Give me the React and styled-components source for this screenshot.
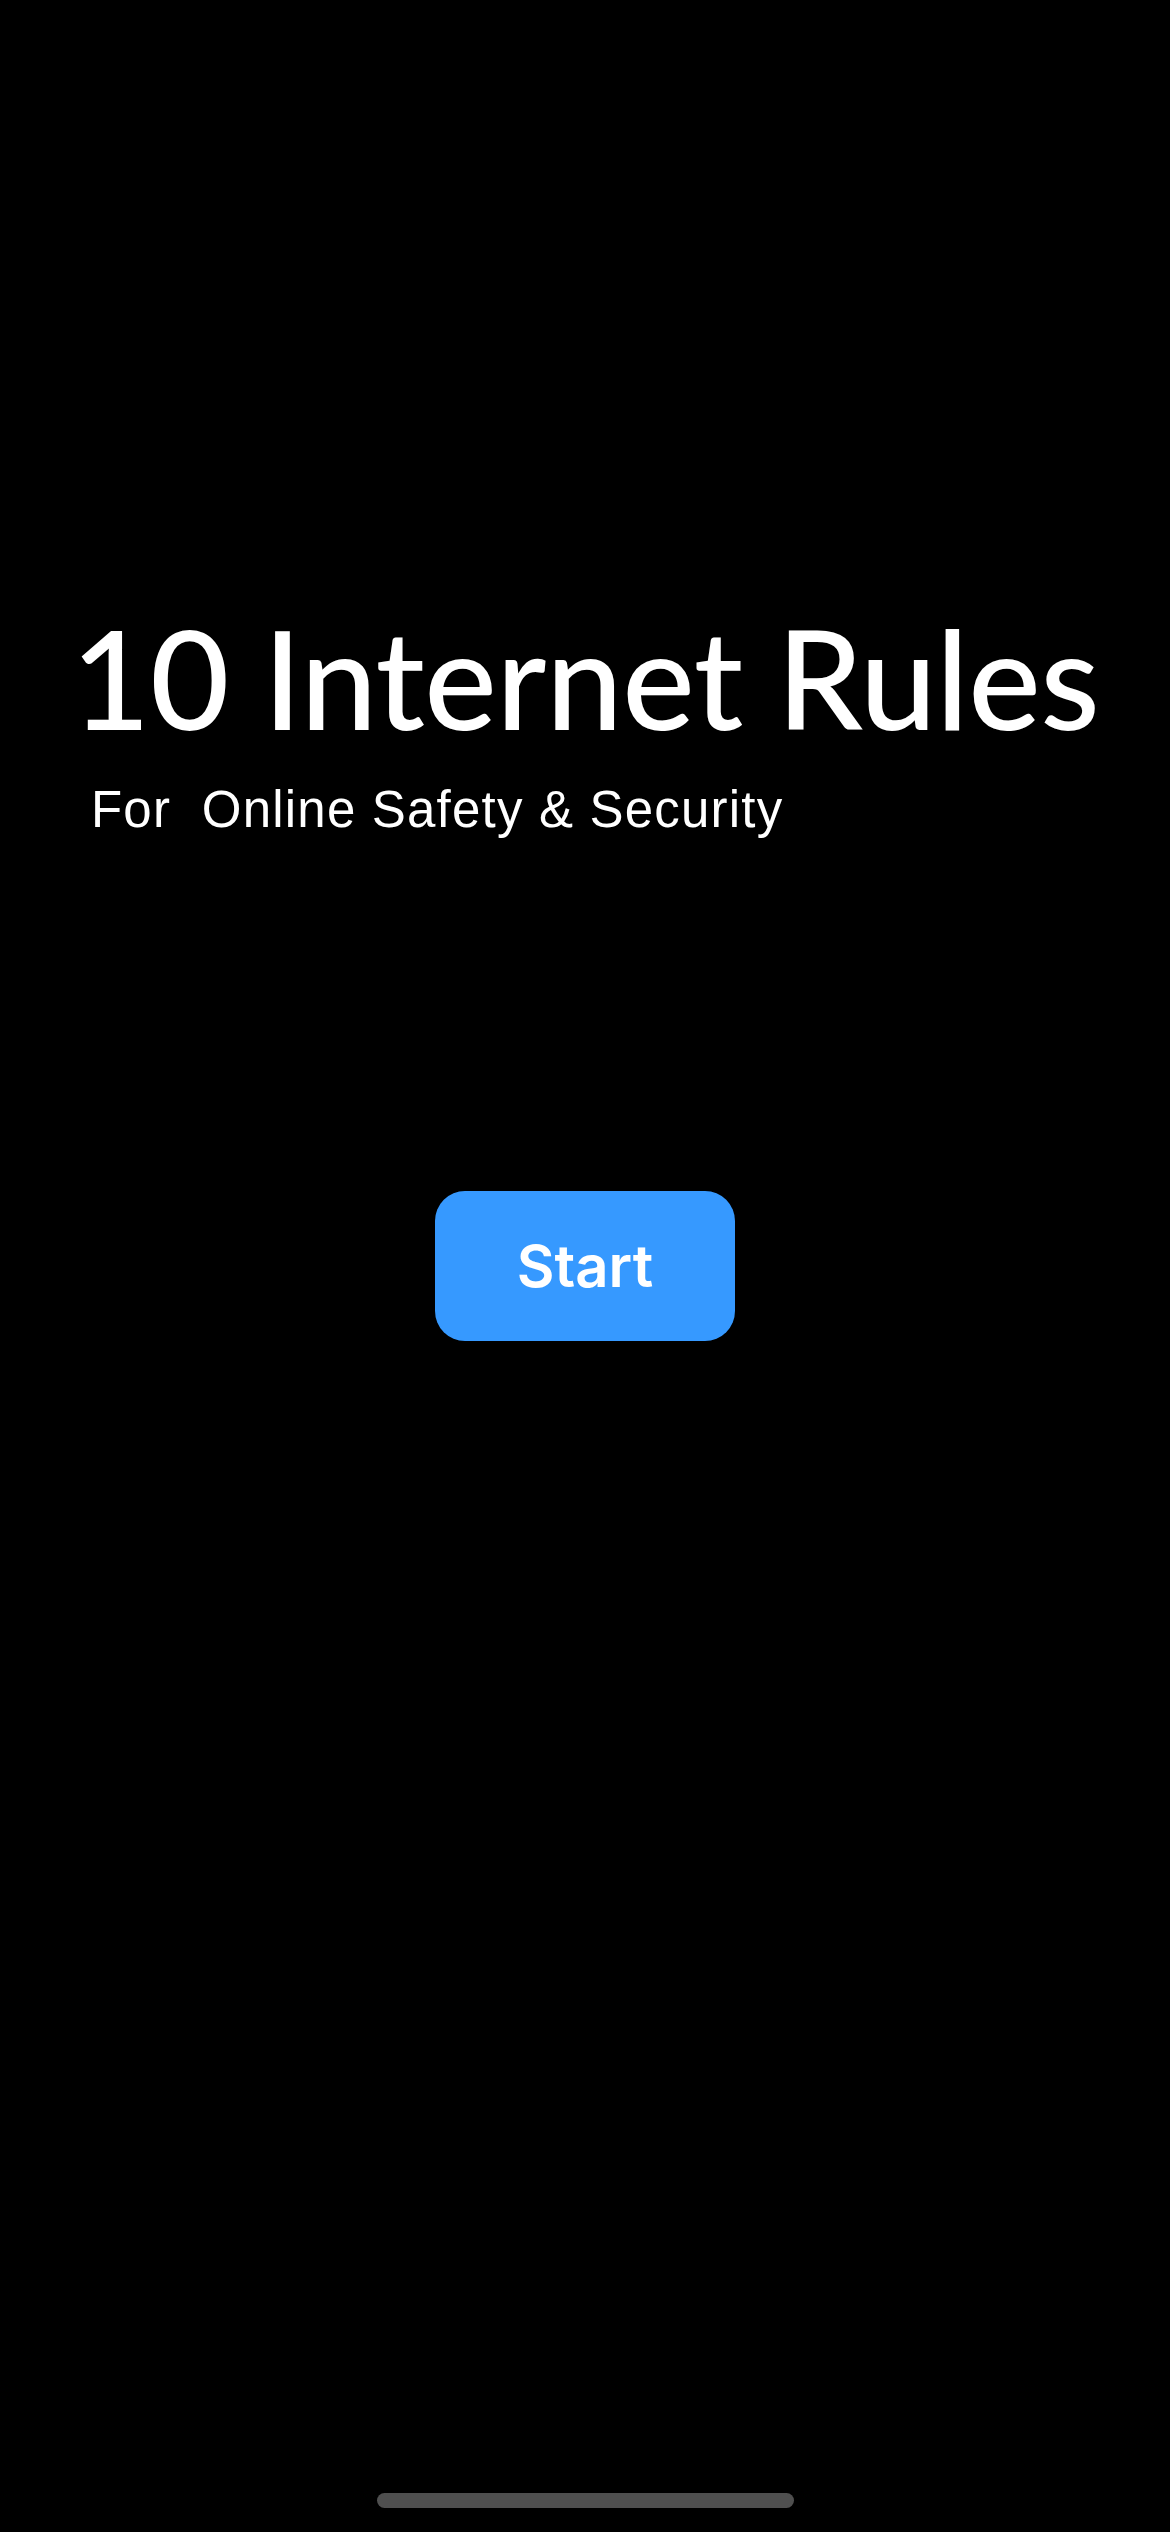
import * as React from "react";
import styled, { createGlobalStyle } from "styled-components";

const GlobalStyle = createGlobalStyle`
    html, body {
        margin: 0;
        padding: 0;
        background: #000000;
    }
`;

const Screen = styled.div`
    display: flex;
    flex-direction: column;
    align-items: center;
    height: 2532px;
    width: 1170px;
    background: #000000;
    color: #FFFFFF;
    overflow: hidden;
`;

const Heading = styled.div`
    display: flex;
    flex-direction: column;
    align-items: flex-start;
    padding-top: 592px;
    width: 1028px;
`;

const Title = styled.h1`
    margin: 0;
    font-family: Lato, "Noto Sans", sans-serif;
    font-weight: 500;
    font-size: 137px;
    line-height: 170px;
    letter-spacing: -0.5px;
    white-space: nowrap;
`;

const Subtitle = styled.p`
    margin: 20px 0 0 20px;
    font-family: "Liberation Sans", Arial, sans-serif;
    font-size: 51px;
    line-height: 56px;
    letter-spacing: 1.2px;
    white-space: pre;
`;

const StartButton = styled.button`
    display: flex;
    align-items: center;
    justify-content: center;
    margin-top: 353px;
    width: 300px;
    height: 150px;
    border: none;
    border-radius: 30px;
    background: #3699FF;
    color: #FFFFFF;
    font-family: Inter, "Liberation Sans", sans-serif;
    font-weight: 600;
    font-size: 58px;
    cursor: pointer;
`;

const Spacer = styled.div`
    flex: 1;
`;

const HomeIndicator = styled.div`
    width: 417px;
    height: 15px;
    border-radius: 8px;
    background: #4F4F4F;
    margin-bottom: 24px;
`;

export default function App() {
    return (
        <Screen>
            <GlobalStyle />
            <Heading>
                <Title>10 Internet Rules</Title>
                <Subtitle>For  Online Safety &amp; Security</Subtitle>
            </Heading>
            <StartButton>Start</StartButton>
            <Spacer />
            <HomeIndicator />
        </Screen>
    );
}
